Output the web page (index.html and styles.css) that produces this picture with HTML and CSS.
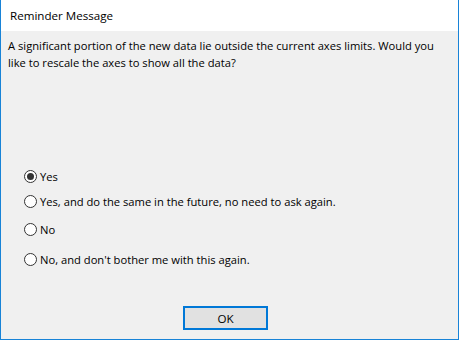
FILE: index.html
```html
<!DOCTYPE html>
<html>
<head>
<meta charset="utf-8">
<link rel="stylesheet" href="styles.css">
</head>
<body>
<div class="window">
  <div class="titlebar">Reminder Message</div>
  <div class="content">
    <p class="message">A significant portion of the new data lie outside the current axes limits. Would you like to rescale the axes to show all the data?</p>
    <div class="options">
      <label class="option opt1"><span class="radio checked"></span><span>Yes</span></label>
      <label class="option opt2"><span class="radio"></span><span>Yes, and do the same in the future, no need to ask again.</span></label>
      <label class="option opt3"><span class="radio"></span><span>No</span></label>
      <label class="option opt4"><span class="radio"></span><span>No, and don't bother me with this again.</span></label>
    </div>
    <div class="actions"><button class="ok">OK</button></div>
  </div>
</div>
</body>
</html>
```
FILE: styles.css
```css
html, body { margin: 0; padding: 0; background: #f0f0f0; }
.window {
  width: 459px; height: 340px; box-sizing: border-box;
  border: 1px solid #1883d7; border-top: none;
  background: #f0f0f0;
  font-family: "Open Sans", "Noto Sans", sans-serif;
  font-size: 11.2px; color: #000;
  display: flex; flex-direction: column;
}
.titlebar {
  height: 31px; line-height: 31px; background: #fff;
  padding-left: 9px; font-size: 11.6px; color: #000;
}
.content { flex: 1; display: flex; flex-direction: column; padding: 0 0 0 7px; }
.message { margin: 6px 4px 0 0; line-height: 17px; }
.options { display: flex; flex-direction: column; margin-top: 97px; margin-left: 16px; }
.option { display: flex; align-items: center; height: 16px; gap: 3px; }
.opt2 { margin-top: 9px; }
.opt3 { margin-top: 12px; }
.opt4 { margin-top: 14px; }
.radio {
  width: 11px; height: 11px; border: 1px solid #333; border-radius: 50%;
  background: #fff; display: flex; align-items: center; justify-content: center;
}
.radio.checked::after { content: ""; width: 7px; height: 7px; border-radius: 50%; background: #333; }
.actions { display: flex; justify-content: flex-start; margin-top: 39px; padding-left: 175px; }
.ok {
  width: 85px; height: 24px; box-sizing: border-box;
  border: 2px solid #0078d7; background: #e1e1e1;
  font-family: inherit; font-size: 11.6px; color: #000; padding: 0;
}
```
